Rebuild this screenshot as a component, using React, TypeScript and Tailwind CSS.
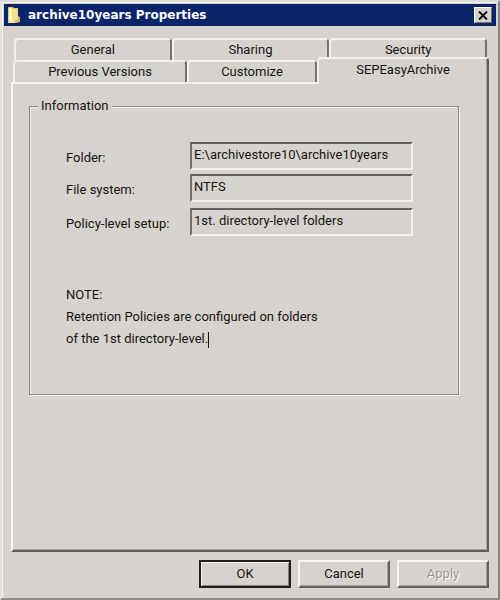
import { useId } from "react";
import clsx from "clsx";

const backTabs = ["General", "Sharing", "Security"];
const frontTabs = ["Previous Versions", "Customize", "SEPEasyArchive"];
const activeTab = "SEPEasyArchive";

const FolderIcon = () => (
  <svg width="14" height="18" viewBox="0 0 14 18" aria-hidden="true">
    <path d="M1 1h5l1 1h4v14l-2 1H1z" fill="#e3c867" />
    <path d="M2 2h3v13H2z" fill="#fff6c4" />
    <path d="M5 3h6v10l-4 3H5z" fill="#f3df8e" />
    <path d="M11 10l2 1v5l-4 1-2-1 4-2z" fill="#d2b85c" />
    <path d="M1 16l5-1 2 2H2z" fill="#fdf0b0" />
  </svg>
);

const CloseIcon = () => (
  <svg width="10" height="9" viewBox="0 0 10 9" aria-hidden="true">
    <path d="M1 0.5L9 8.5M9 0.5L1 8.5" stroke="#111" strokeWidth="2" />
  </svg>
);

const Tab = ({ label }: { label: string }) => {
  const active = label === activeTab;
  return (
    <button
      type="button"
      role="tab"
      aria-selected={active}
      className={clsx(
        "rounded-t-sm border-t-2 border-l-2 border-[#f3f1ec] bg-[#d6d3ce]",
        active
          ? "z-10 -mt-[3px] -mb-[2px] border-r-2 border-r-[#625f5b] pb-[3px] shadow-[inset_-1px_0_#a5a29d]"
          : "border-r-2 border-r-[#75726e]",
        label === "Customize" && "border-r-0"
      )}
    >
      {label}
    </button>
  );
};

const Field = ({ label, value, className }: { label: string; value: string; className?: string }) => {
  const id = useId();
  return (
    <div className={clsx("flex items-start", className)}>
      <label htmlFor={id} className="w-[124px] shrink-0 pt-[6px] leading-5">
        {label}
      </label>
      <input
        id={id}
        readOnly
        defaultValue={value}
        className="h-7 min-w-0 flex-1 border-2 border-t-[#625f5b] border-r-[#f3f1ec] border-b-[#f3f1ec] border-l-[#75726e] bg-[#d6d3ce] px-[2px] pb-1 outline-none"
      />
    </div>
  );
};

const dialogButton =
  "h-7 w-[92px] border-2 border-t-[#f6f4f0] border-l-[#f6f4f0] border-r-[#65625e] border-b-[#65625e] shadow-[inset_-1px_-1px_#a5a29d]";

const App = () => {
  return (
    <div className="flex min-h-screen flex-col border-2 border-t-[#dddad5] border-l-[#e4e2dd] border-r-[#85858a] border-b-[#8d8b89] bg-[#d6d3ce] font-['Roboto','Liberation_Sans',sans-serif] text-[13px] text-[#161412] shadow-[inset_1px_1px_#f6f4f0]">
      <header className="mx-[2px] mt-[2px] flex h-[22px] items-center bg-[#0a246a] pr-1 pl-[3px]">
        <FolderIcon />
        <h1 className="ml-[7px] flex-1 font-['DejaVu_Sans',sans-serif] text-[12px] font-bold text-white">
          archive10years Properties
        </h1>
        <button
          type="button"
          aria-label="Close"
          className="flex h-4 w-[18px] items-center justify-center border border-t-white border-l-white border-r-[#75726e] border-b-[#75726e] bg-[#d6d3ce]"
        >
          <CloseIcon />
        </button>
      </header>

      <main className="flex flex-1 flex-col px-[9px] pt-3">
        <div role="tablist" aria-label="Properties">
          <div className="mr-[2px] ml-[3px] grid h-[22px] grid-cols-3">
            {backTabs.map((tab) => (
              <Tab key={tab} label={tab} />
            ))}
          </div>
          <div className="ml-[2px] grid h-[22px] grid-cols-[174fr_130fr_172fr]">
            {frontTabs.map((tab) => (
              <Tab key={tab} label={tab} />
            ))}
          </div>
        </div>

        <section
          role="tabpanel"
          aria-label={activeTab}
          className="flex-1 border-2 border-t-[#f3f1ec] border-l-[#f6f4f0] border-r-[#625f5b] border-b-[#625f5b] px-4 pt-3 shadow-[inset_-1px_-1px_#a5a29d]"
        >
          <fieldset className="mr-3 border border-[#8c8985] pr-[45px] pb-11 pl-9 shadow-[1px_1px_#f3f1ec,inset_1px_1px_#f3f1ec]">
            <legend className="-ml-7 bg-[#d6d3ce] px-[3px] leading-5">Information</legend>
            <Field label="Folder:" value="E:\archivestore10\archive10years" className="mt-[26px]" />
            <Field label="File system:" value="NTFS" className="mt-1" />
            <Field label="Policy-level setup:" value="1st. directory-level folders" className="mt-[6px]" />

            <div className="mt-12 leading-[22px]">
              <p>NOTE:</p>
              <p>Retention Policies are configured on folders</p>
              <p>
                of the 1st directory-level.
                <span className="inline-block h-4 border-l border-[#161412] align-middle" />
              </p>
            </div>
          </fieldset>
        </section>

        <footer className="flex justify-end gap-[7px] pt-2 pb-[10px]">
          <button type="button" className="h-7 w-[92px] border-2 border-[#211f1d] shadow-[inset_1px_1px_#f6f4f0,inset_-1px_-1px_#85827e]">
            OK
          </button>
          <button type="button" className={dialogButton}>
            Cancel
          </button>
          <button type="button" disabled className={clsx(dialogButton, "text-[#9b9894] text-shadow-[1px_1px_#fff]")}>
            Apply
          </button>
        </footer>
      </main>
    </div>
  );
};

export default App;
